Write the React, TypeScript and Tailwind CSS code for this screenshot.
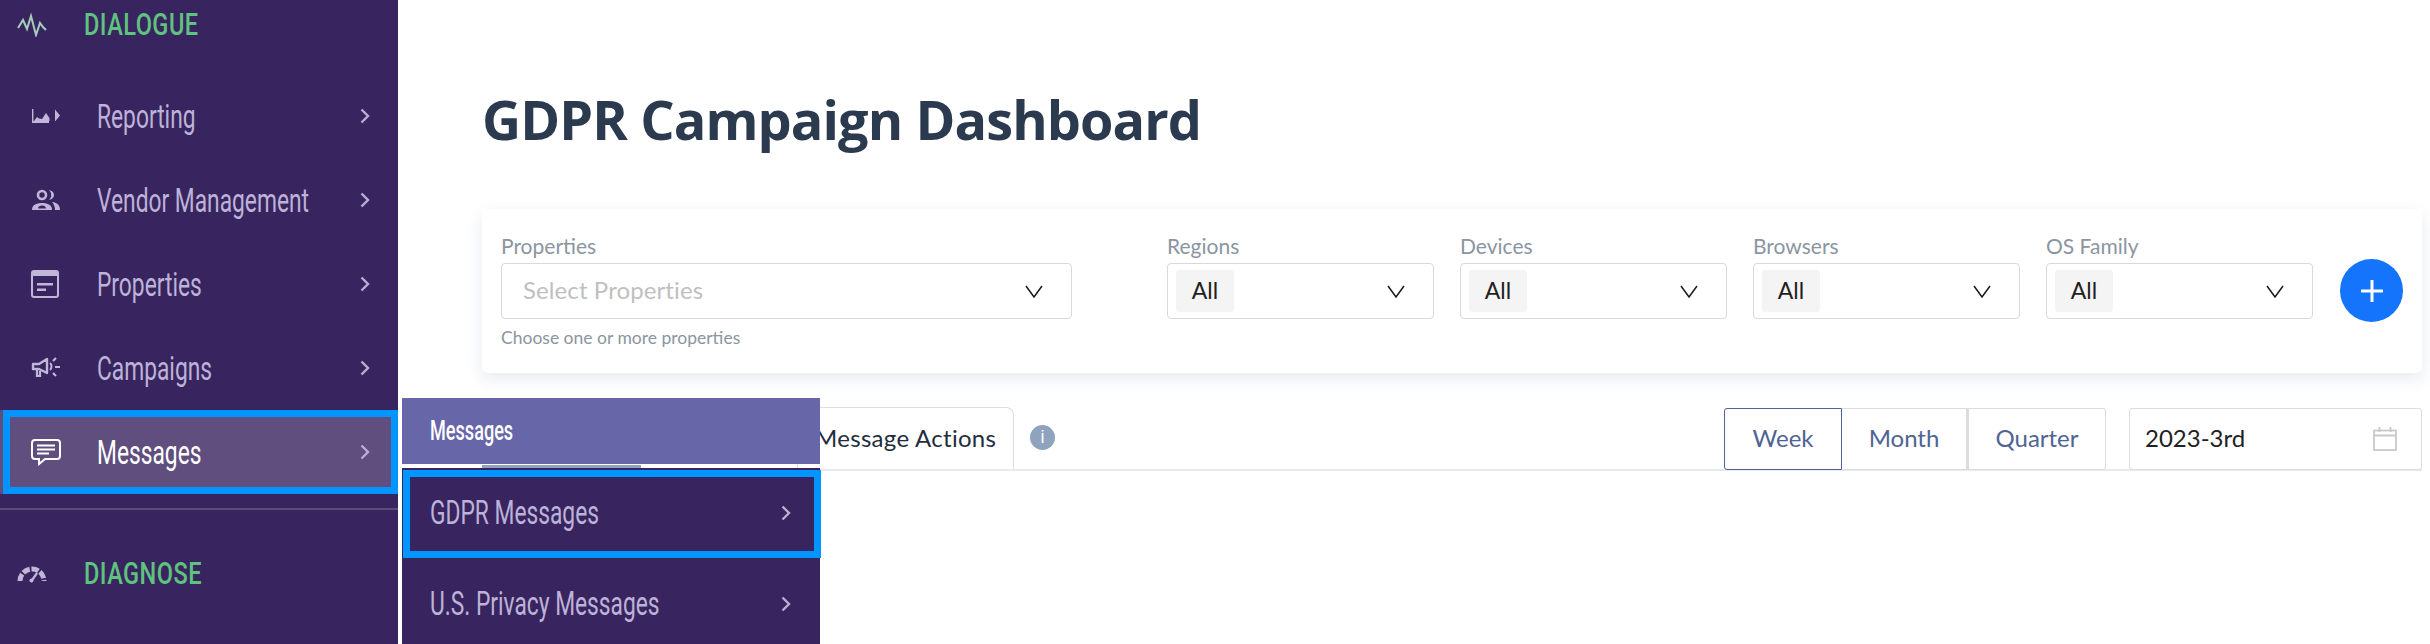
import React from "react";

const narrow = "font-['Roboto','Liberation_Sans',sans-serif]";
const body = "font-['Lato','Open_Sans',sans-serif]";

function Chevron({ className = "" }: { className?: string }) {
  return (
    <svg width="10" height="16" viewBox="0 0 10 16" fill="none" className={`shrink-0 ${className}`}>
      <path d="M1.500 1.500 8 8l-6.500 6.500" stroke="#b9aed6" strokeWidth="2.400" />
    </svg>
  );
}

function SelectChevron() {
  return (
    <svg width="18" height="13" viewBox="0 0 18 13" fill="none">
      <path d="M1 1l8 11 8-11" stroke="#1a1a1a" strokeWidth="1.500" />
    </svg>
  );
}

const IconPulse = () => (
  <svg width="30" height="24" viewBox="0 0 30 24" fill="none">
    <path d="M1 15 6 7l4 9 4-13 5 19 4-12 3 4 3 3" stroke="#a8cdbb" strokeWidth="2" />
  </svg>
);
const IconReport = () => (
  <svg width="30" height="16" viewBox="0 0 30 16" fill="#c0b6da">
    <path d="M1 1h1.400v12H18V15H1z" />
    <path d="M3 13l3-4 2 1.500L11 11l4-6 3.500 5V13z" />
    <path d="M24 1.500l5 6-5 6z" />
  </svg>
);
const IconPeople = () => (
  <svg width="30" height="22" viewBox="0 0 30 22" fill="none">
    <circle cx="11" cy="6" r="4" stroke="#c0b6da" strokeWidth="2.600" />
    <path d="M1 21c0-5 4-7 10-7s10 2 10 7z" fill="#c0b6da" />
    <path d="M7 19.500c0-2 2-3 4-3s4 1 4 3z" fill="#38255f" />
    <path d="M18 1c3 .5 5 2.500 5 5s-2 4.500-5 5c1.500-1.500 2.200-3 2.200-5S19.500 2.500 18 1z" fill="#c0b6da" />
    <path d="M21 13c5 .5 8 3 8 8h-5c0-3-1-6-3-8z" fill="#c0b6da" />
  </svg>
);
const IconProps = () => (
  <svg width="28" height="28" viewBox="0 0 28 28" fill="none">
    <rect x="1" y="1" width="26" height="26" rx="2" stroke="#c0b6da" strokeWidth="2" />
    <rect x="1" y="1" width="26" height="5" fill="#c0b6da" />
    <path d="M6 13h16v2.400H6zM6 18.500h9v2.400H6z" fill="#c0b6da" />
  </svg>
);
const IconMega = () => (
  <svg width="30" height="24" viewBox="0 0 30 24" fill="none" stroke="#c0b6da">
    <path d="M2 8h6l8-5v14l-8-4H2z" strokeWidth="2.400" strokeLinejoin="round" />
    <path d="M6 14v6h3v-5" strokeWidth="2.200" />
    <path d="M19 7c2 1.500 2 5 0 7" strokeWidth="2" />
    <path d="M22 5l3-3M24 11h5M22 17l3 3" strokeWidth="2.200" />
  </svg>
);
const IconChat = () => (
  <svg width="30" height="27" viewBox="0 0 30 27" fill="none">
    <path d="M4 1h22a3 3 0 0 1 3 3v13a3 3 0 0 1-3 3H14l-6 5v-5H4a3 3 0 0 1-3-3V4a3 3 0 0 1 3-3z" stroke="#fff" strokeWidth="2" />
    <path d="M6 6.500h18M6 10.500h18M6 14.500h12" stroke="#fff" strokeWidth="2" />
  </svg>
);
const IconGauge = () => (
  <svg width="30" height="18" viewBox="0 0 30 18" fill="none" stroke="#c0b6da">
    <path d="M3 16A12 12 0 0 1 27 16" strokeWidth="5" strokeDasharray="7.300 1.800" />
    <path d="M20 8l-4.500 6.500" strokeWidth="2.200" />
    <circle cx="14.500" cy="15.500" r="2" fill="#c0b6da" strokeWidth="0" />
  </svg>
);

function Row({ icon, label, active }: { icon: React.ReactNode; label: string; active?: boolean }) {
  return (
    <div className={`relative flex h-[84px] items-center pl-[31px] pr-[28px] ${active ? "bg-[#604e7f]" : ""}`}>
      {active && <div className="absolute inset-y-0 left-[3px] right-0 border-[7px] border-[#0095ff]" />}
      <div className="relative flex w-[66px] shrink-0 items-center">{icon}</div>
      <span className={`relative block w-0 flex-1 origin-left scale-x-[0.69] whitespace-nowrap pt-[2px] ${narrow} text-[33px] ${active ? "text-white" : "text-[#bdb2d8]"}`}>{label}</span>
      <Chevron className="relative" />
    </div>
  );
}

function SectionHead({ icon, label, className = "" }: { icon: React.ReactNode; label: string; className?: string }) {
  return (
    <div className={`flex items-center pl-[17px] ${className}`}>
      <div className="flex w-[67px] shrink-0 items-center">{icon}</div>
      <span className={`block origin-left scale-x-[0.76] whitespace-nowrap ${narrow} text-[31px] font-medium tracking-[0.6px] text-[#5fc27e]`}>{label}</span>
    </div>
  );
}

function FilterSelect({ label }: { label: string }) {
  return (
    <div className="w-[267px] shrink-0">
      <div className="flex h-[32px] items-center pb-[2px] text-[21px] text-[#8b95a1]">{label}</div>
      <div className="flex h-[56px] items-center justify-between rounded-[4px] border border-[#d9d9d9] pl-[8px] pr-[28px]">
        <span className="flex h-[42px] w-[58px] items-center justify-center rounded-[3px] bg-[#f4f4f4] pb-[2px] text-[23px] text-[#1f1f1f]">All</span>
        <SelectChevron />
      </div>
    </div>
  );
}

export default function App() {
  return (
    <div className={`relative flex h-[644px] w-[2430px] overflow-hidden bg-white ${body}`}>
      <aside className="w-[398px] shrink-0 bg-[#38255f]">
        <SectionHead icon={<IconPulse />} label="DIALOGUE" className="h-[50px]" />
        <div className="mt-[24px]">
          <Row icon={<IconReport />} label="Reporting" />
          <Row icon={<IconPeople />} label="Vendor Management" />
          <Row icon={<IconProps />} label="Properties" />
          <Row icon={<IconMega />} label="Campaigns" />
          <Row icon={<IconChat />} label="Messages" active />
        </div>
        <div className="mt-[14px] h-[2px] bg-[#5b4a7c]" />
        <SectionHead icon={<IconGauge />} label="DIAGNOSE" className="mt-[39px] h-[50px]" />
      </aside>

      <main className="min-w-0 flex-1 pl-[84px] pr-[8px]">
        <h1 className="flex h-[209px] items-start pt-[84px] font-['Open_Sans',sans-serif] text-[54px] leading-[70px] font-bold tracking-[-0.9px] text-[#2b3a4e]">
          GDPR Campaign Dashboard
        </h1>

        <section className="flex h-[164px] rounded-[6px] bg-white pl-[19px] pr-[19px] pt-[22px] shadow-[0_6px_16px_rgba(60,80,130,0.12)]">
          <div className="w-[571px] shrink-0">
            <div className="flex h-[32px] items-center pb-[2px] text-[21px] text-[#8b95a1]">Properties</div>
            <div className="flex h-[56px] items-center justify-between rounded-[4px] border border-[#d9d9d9] pl-[21px] pr-[28px]">
              <span className="pb-[2px] text-[24px] tracking-[0.1px] text-[#bfbfbf]">Select Properties</span>
              <SelectChevron />
            </div>
            <div className="mt-[9px] text-[17.500px] leading-[20px] text-[#8b95a1]">Choose one or more properties</div>
          </div>
          <div className="ml-[95px] flex gap-[26px]">
            <FilterSelect label="Regions" />
            <FilterSelect label="Devices" />
            <FilterSelect label="Browsers" />
            <FilterSelect label="OS Family" />
          </div>
          <div className="ml-[27px] mt-[28px] flex h-[63px] w-[63px] shrink-0 items-center justify-center rounded-full bg-[#1474fb]">
            <svg width="24" height="24" viewBox="0 0 24 24" fill="none">
              <path d="M12 1v22M1 12h22" stroke="#fff" strokeWidth="3" />
            </svg>
          </div>
        </section>

        <div className="mt-[35px] flex h-[63px] items-start border-b-2 border-[#e6eaf1]">
          <div className="flex h-[62px] self-end">
            <div className="h-full w-[159px] border-b-4 border-[#8fa3c0]" />
            <div className="h-full w-[156px]" />
            <div className="flex h-full w-[217px] items-center rounded-t-[8px] border border-b-0 border-[#dcdcef] pb-[2px] pl-[17px] text-[24px] tracking-[0.3px] text-[#1f2d3d]">
              Message Actions
            </div>
          </div>
          <div className="ml-[16px] mt-[17px] flex h-[25px] w-[25px] items-center justify-center rounded-full bg-[#8fa3bf] font-['Liberation_Sans',sans-serif] text-[18px] text-white">
            i
          </div>
          <div className="ml-auto flex">
            <div className="flex h-[62px] w-[118px] items-center justify-center rounded-l-[3px] border border-[#4f6494] pb-[2px] text-[24px] text-[#4f6494]">Week</div>
            <div className="flex h-[62px] w-[125px] items-center justify-center border border-l-0 border-[#dcdcdc] pb-[2px] text-[24px] text-[#4f6494]">Month</div>
            <div className="flex h-[62px] w-[139px] items-center justify-center rounded-r-[3px] border border-l-2 border-[#dcdcdc] pb-[2px] text-[24px] text-[#4f6494]">Quarter</div>
            <div className="ml-[23px] flex h-[62px] w-[293px] items-center justify-between rounded-[3px] border border-[#dcdcdc] pl-[15px] pr-[24px] text-[24px] text-[#222]">
              <span className="pb-[2px]">2023-3rd</span>
              <svg width="24" height="24" viewBox="0 0 24 24" fill="none" stroke="#c9c9c9" strokeWidth="1.800">
                <rect x="1" y="3.500" width="22" height="19.500" />
                <path d="M1 8.500h22M6.500 0v5M17.500 0v5" />
              </svg>
            </div>
          </div>
        </div>
      </main>

      <div className={`absolute left-[402px] top-[398px] w-[418px] ${narrow}`}>
        <div className="flex h-[66px] items-center bg-[#6666a8] pl-[28px] pt-[1px] text-white">
          <span className="block origin-left scale-x-[0.67] text-[27px] font-medium whitespace-nowrap">Messages</span>
        </div>
        <div className="mt-[4px] h-[2px] bg-[#38255f]" />
        <div className="relative flex h-[88px] items-center bg-[#38255f] pb-[2px] pl-[28px] pr-[29px] text-[#bdb2d8]">
          <div className="absolute -right-[1px] inset-y-0 left-[1px] border-[7px] border-[#0095ff]" />
          <span className="relative block w-0 flex-1 origin-left scale-x-[0.69] text-[33px] whitespace-nowrap">GDPR Messages</span>
          <Chevron className="relative" />
        </div>
        <div className="flex h-[94px] items-center bg-[#38255f] pb-[2px] pl-[28px] pr-[29px] text-[#bdb2d8]">
          <span className="block w-0 flex-1 origin-left scale-x-[0.69] text-[33px] whitespace-nowrap">U.S. Privacy Messages</span>
          <Chevron />
        </div>
      </div>
    </div>
  );
}
